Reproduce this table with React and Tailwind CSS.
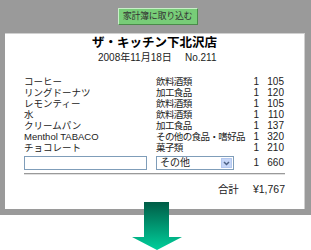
import React from "react";

const rows = [
  ["コーヒー", "飲料酒類", "1", "105"],
  ["リングドーナツ", "加工食品", "1", "120"],
  ["レモンティー", "飲料酒類", "1", "105"],
  ["水", "飲料酒類", "1", "110"],
  ["クリームパン", "加工食品", "1", "137"],
  ["Menthol TABACO", "その他の食品・嗜好品", "1", "320"],
  ["チョコレート", "菓子類", "1", "210"],
];

export default function App() {
  return (
    <div
      className="relative w-[311px] h-[250px] bg-white overflow-hidden text-[#222]"
      style={{ fontFamily: '"Liberation Sans", "Noto Sans CJK JP", sans-serif' }}
    >
      <div className="h-[215px] bg-[#9a9a9a] pt-[8px] flex flex-col">
        <div className="flex justify-center pl-[4px]">
          <div className="w-[80px] h-[17px] bg-[#78cc78] border border-t-[#c8eec8] border-l-[#c8eec8] border-r-[#4a8a4a] border-b-[#4a8a4a] flex items-center justify-center text-[9px] leading-none text-[#333] tracking-[-0.3px]">
            家計簿に取り込む
          </div>
        </div>
        <div className="mt-[8px] ml-[5px] w-[300px] h-[176px] bg-white border-t border-r border-[#d0d0d0] px-[19px] flex flex-col">
          <div className="mt-[2px] h-[14px] leading-[14px] text-center text-[12.5px] font-bold text-black">
            ザ・キッチン下北沢店
          </div>
          <div className="mt-[2px] h-[12px] leading-[12px] text-[10px] flex pl-[74px]">
            <span className="w-[87px]">2008年11月18日</span>
            <span>No.211</span>
          </div>
          <div className="mt-[12px] grid grid-cols-[132px_88px_15px_25px] text-[10px]">
            {rows.map((r, i) => (
              <React.Fragment key={i}>
                <div className="h-[11px] leading-[11px] whitespace-nowrap text-[9.5px]">{r[0]}</div>
                <div className="h-[11px] leading-[11px] whitespace-nowrap text-[9.5px] tracking-[-0.6px]">{r[1]}</div>
                <div className="h-[11px] leading-[11px] text-right">{r[2]}</div>
                <div className="h-[11px] leading-[11px] text-right">{r[3]}</div>
              </React.Fragment>
            ))}
            <div className="pt-[3px] h-[17px]">
              <div className="w-[123px] h-[14px] border border-[#7f9db9] bg-white" />
            </div>
            <div className="pt-[3px] h-[17px]">
              <div className="w-[78px] h-[14px] border border-[#7f9db9] bg-white flex items-center pl-[3px] relative">
                <span className="text-[10px] leading-none">その他</span>
                <div className="absolute right-[1px] top-[1px] w-[11px] h-[10px] bg-[#c6d6f7] border border-[#b4c8ef] flex items-center justify-center">
                  <svg width="7" height="5" viewBox="0 0 7 5">
                    <path d="M1 1 L3.5 3.5 L6 1" stroke="#4d6185" strokeWidth="1.5" fill="none" />
                  </svg>
                </div>
              </div>
            </div>
            <div className="pt-[3px] h-[17px] leading-[14px] text-right">1</div>
            <div className="pt-[3px] h-[17px] leading-[14px] text-right">660</div>
          </div>
          <div className="mt-[3px] w-[261px] h-[2px] border-t border-[#9a9a9a] border-b border-b-[#e0e0e0]" />
          <div className="mt-[8px] flex justify-end text-[10.5px] leading-[12px]">
            <span className="mr-[14px]">合計</span>
            <span>¥1,767</span>
          </div>
        </div>
      </div>
      <svg
        className="absolute left-[132px] top-[202px]"
        width="50"
        height="48"
        viewBox="0 0 50 48"
      >
        <defs>
          <linearGradient id="ag" x1="0" y1="0" x2="0" y2="1">
            <stop offset="0" stopColor="#005c46" />
            <stop offset="1" stopColor="#00d09c" />
          </linearGradient>
        </defs>
        <path d="M12 0 H37 V35 H50 L25 48 L0 35 H12 Z" fill="url(#ag)" />
      </svg>
    </div>
  );
}
